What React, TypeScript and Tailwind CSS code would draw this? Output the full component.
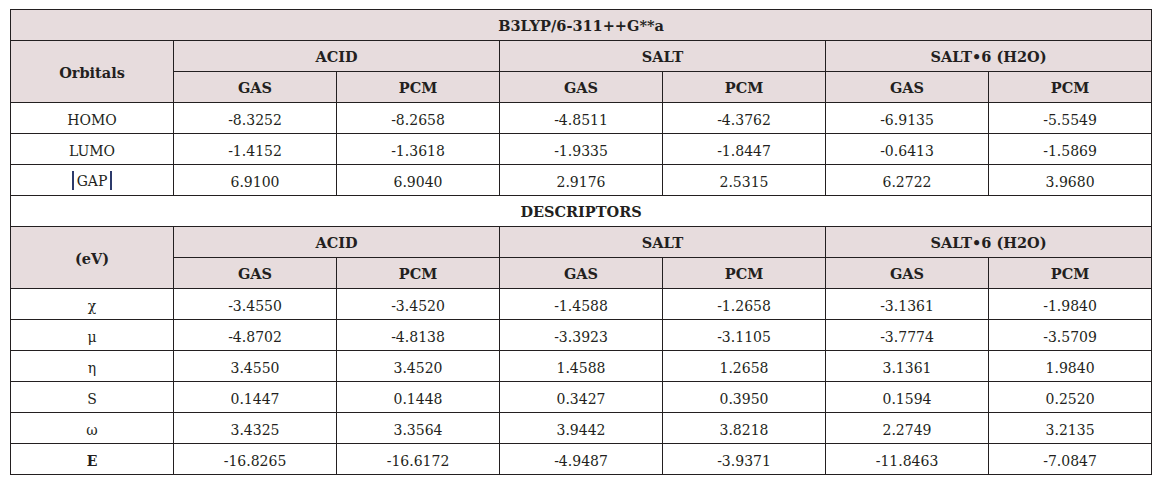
import React from "react";

const font = { fontFamily: '"DejaVu Serif", "Liberation Serif", serif' };

const orbitals = [
  ["HOMO", "-8.3252", "-8.2658", "-4.8511", "-4.3762", "-6.9135", "-5.5549"],
  ["LUMO", "-1.4152", "-1.3618", "-1.9335", "-1.8447", "-0.6413", "-1.5869"],
  ["GAP", "6.9100", "6.9040", "2.9176", "2.5315", "6.2722", "3.9680"],
];

const descriptors = [
  ["χ", "-3.4550", "-3.4520", "-1.4588", "-1.2658", "-3.1361", "-1.9840"],
  ["μ", "-4.8702", "-4.8138", "-3.3923", "-3.1105", "-3.7774", "-3.5709"],
  ["η", "3.4550", "3.4520", "1.4588", "1.2658", "3.1361", "1.9840"],
  ["S", "0.1447", "0.1448", "0.3427", "0.3950", "0.1594", "0.2520"],
  ["ω", "3.4325", "3.3564", "3.9442", "3.8218", "2.2749", "3.2135"],
  ["E", "-16.8265", "-16.6172", "-4.9487", "-3.9371", "-11.8463", "-7.0847"],
];

const cell = "border border-[#231f20] h-[31px] p-0 pt-[3px] text-center align-middle";
const head = cell + " font-bold text-[14.5px]";

function Label({ name }: { name: string }) {
  if (name === "GAP") {
    return (
      <span className="inline-flex items-center">
        <span className="inline-block w-[1.5px] h-[19px] bg-[#2c3a6b] mr-[3px]" />
        GAP
        <span className="inline-block w-[1.5px] h-[19px] bg-[#2c3a6b] ml-[3px]" />
      </span>
    );
  }
  if (name === "E") return <span className="font-bold">Ε</span>;
  return <>{name}</>;
}

function GroupHead({ first }: { first: string }) {
  return (
    <>
      <tr className="bg-[#e7dcdd]">
        <td rowSpan={2} className={head}>{first}</td>
        <td colSpan={2} className={head}>ACID</td>
        <td colSpan={2} className={head}>SALT</td>
        <td colSpan={2} className={head}>SALT•6 (H2O)</td>
      </tr>
      <tr className="bg-[#e7dcdd]">
        {["GAS", "PCM", "GAS", "PCM", "GAS", "PCM"].map((t, i) => (
          <td key={i} className={head}>{t}</td>
        ))}
      </tr>
    </>
  );
}

function Rows({ data }: { data: string[][] }) {
  return (
    <>
      {data.map((r) => (
        <tr key={r[0]}>
          {r.map((v, i) => (
            <td key={i} className={cell}>
              {i === 0 ? <Label name={v} /> : v}
            </td>
          ))}
        </tr>
      ))}
    </>
  );
}

export default function App() {
  return (
    <div className="w-[1158px] h-[480px] bg-white pt-[9px] pl-[10px]" style={font}>
      <table className="border-collapse table-fixed w-[1142px] text-[14px] text-[#231f20] leading-none">
        <colgroup>
          {Array.from({ length: 7 }).map((_, i) => (
            <col key={i} className="w-[163px]" />
          ))}
        </colgroup>
        <tbody>
          <tr className="bg-[#e7dcdd]">
            <td colSpan={7} className={head}>B3LYP/6-311++G**a</td>
          </tr>
          <GroupHead first="Orbitals" />
          <Rows data={orbitals} />
          <tr>
            <td colSpan={7} className={head}>DESCRIPTORS</td>
          </tr>
          <GroupHead first="(eV)" />
          <Rows data={descriptors} />
        </tbody>
      </table>
    </div>
  );
}
